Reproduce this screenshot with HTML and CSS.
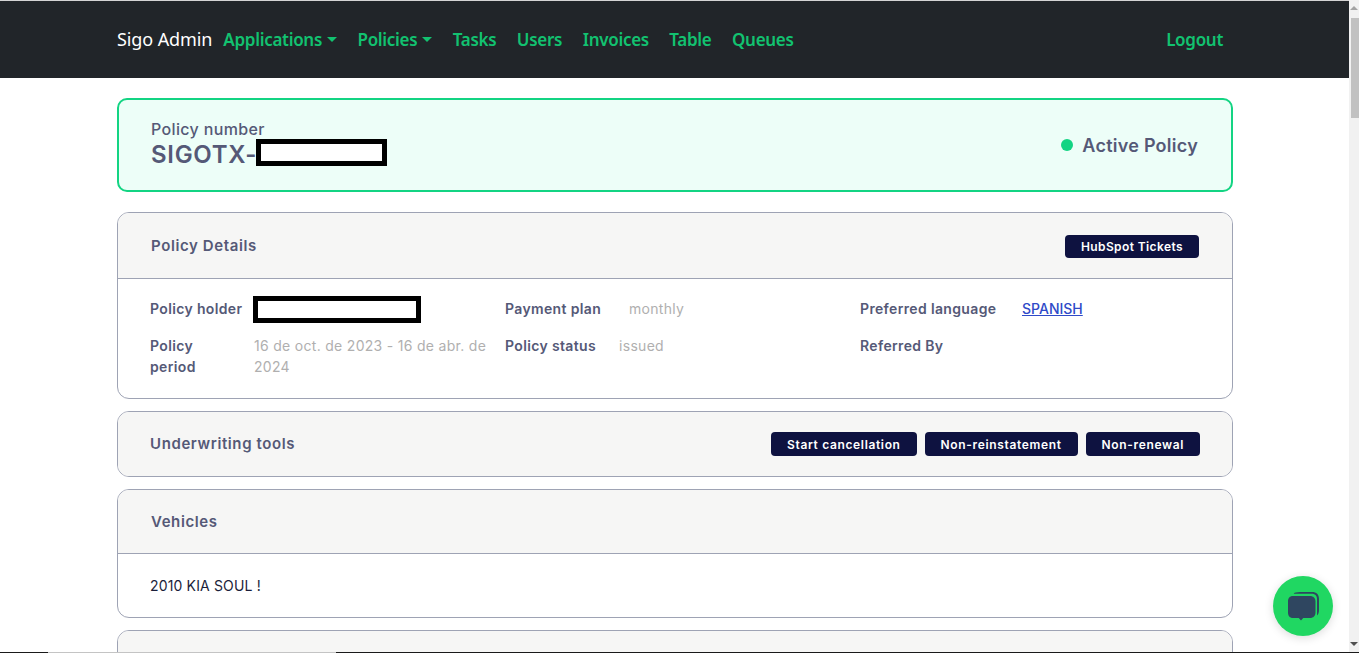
FILE: index.html
```html
<!DOCTYPE html>
<html lang="en">
<head>
<meta charset="utf-8">
<title>Sigo Admin</title>
<link rel="stylesheet" href="styles.css">
</head>
<body>
<div class="screen">
  <div class="window">
    <div class="page">
      <nav class="navbar">
        <a class="brand">Sigo Admin</a>
        <ul class="nav-links">
          <li><a class="nav-link caret">Applications</a></li>
          <li><a class="nav-link caret">Policies</a></li>
          <li><a class="nav-link">Tasks</a></li>
          <li><a class="nav-link">Users</a></li>
          <li><a class="nav-link">Invoices</a></li>
          <li><a class="nav-link">Table</a></li>
          <li><a class="nav-link">Queues</a></li>
        </ul>
        <a class="nav-link logout">Logout</a>
      </nav>
      <main class="content">
        <section class="policy-banner">
          <div class="policy-id">
            <div class="policy-label">Policy number</div>
            <div class="policy-number">SIGOTX-<span class="redact redact-number"></span></div>
          </div>
          <div class="policy-state"><span class="dot"></span>Active Policy</div>
        </section>

        <section class="card">
          <header class="card-head head-details">
            <h2>Policy Details</h2>
            <div class="actions"><button class="btn btn-hubspot">HubSpot Tickets</button></div>
          </header>
          <div class="details">
            <div class="pair pair-a"><span class="key">Policy holder</span><span class="redact redact-holder"></span></div>
            <div class="pair pair-b"><span class="key">Payment plan</span><span class="val">monthly</span></div>
            <div class="pair pair-c"><span class="key">Preferred language</span><a class="link">SPANISH</a></div>
            <div class="pair pair-a"><span class="key">Policy<br>period</span><span class="val">16 de oct. de 2023 - 16 de abr. de 2024</span></div>
            <div class="pair pair-s"><span class="key">Policy status</span><span class="val">issued</span></div>
            <div class="pair pair-c"><span class="key">Referred By</span><span class="val"></span></div>
          </div>
        </section>

        <section class="card">
          <header class="card-head head-tools">
            <h2 class="title-tools">Underwriting tools</h2>
            <div class="actions">
              <button class="btn">Start cancellation</button>
              <button class="btn">Non-reinstatement</button>
              <button class="btn">Non-renewal</button>
            </div>
          </header>
        </section>

        <section class="card">
          <header class="card-head head-vehicles"><h2>Vehicles</h2></header>
          <div class="vehicles">2010 KIA SOUL !</div>
        </section>

        <section class="card">
          <header class="card-head head-vehicles"></header>
        </section>
      </main>
    </div>
    <aside class="scrollbar">
      <span class="arrow arrow-up"></span>
      <span class="thumb"></span>
      <span class="arrow arrow-down"></span>
    </aside>
  </div>
  <div class="taskbar"><span class="task-a"></span><span class="task-b"></span><span class="task-c"></span></div>
</div>
<button class="chat" aria-label="Chat">
  <svg width="32" height="32" viewBox="0 0 32 32" aria-hidden="true">
    <path d="M7 3C9 2.200 12 2 16 2h9c4.500 0 7 2.500 7 7v11c0 2.500-.6 4.300-2 5.500V9.500C30 5.500 28 3.800 24 3.800H8C7 3.800 6.500 3.300 7 3z" fill="#2f4660"/>
    <path d="M6 6h17c3.300 0 5.500 2.200 5.500 5.500V22.500c0 3.300-2.200 5.500-5.500 5.500h-6.800L14 30.500 11.800 28H6c-3.300 0-5-2.200-5-5.500v-11C1 8.200 2.700 6 6 6z" fill="#2f4660"/>
  </svg>
</button>
</body>
</html>
```
FILE: styles.css
```css
* { box-sizing: border-box; }
html, body { margin: 0; height: 100%; overflow: hidden; background: #fff; }
body { font-family: "Inter", "Liberation Sans", sans-serif; color: #555977; }
h2 { margin: 0; }

.screen { height: 100vh; display: flex; flex-direction: column; }
.window { flex: 1; min-height: 0; display: flex; }
.page { flex: 1; min-width: 0; overflow: hidden; }

.navbar {
  height: 78px;
  border-top: 1px solid #d4d4d4;
  background: #212529;
  padding: 0 126px 1px 117px;
  display: flex;
  align-items: center;
  font-family: "Noto Sans", "Open Sans", sans-serif;
  font-size: 17px;
}
.brand { color: #fff; font-size: 18px; margin-right: 11px; letter-spacing: -.1px; }
.nav-links { list-style: none; margin: 0; padding: 0; display: flex; gap: 20.5px; flex: 1; }
.nav-link { color: #12c270; font-weight: 600; display: flex; align-items: center; letter-spacing: -.3px; }
.caret::after {
  content: "";
  margin-left: 5px;
  border-top: 5px solid #12c270;
  border-left: 5px solid transparent;
  border-right: 5px solid transparent;
}

.content { width: 1116px; margin-left: 117px; padding-top: 20px; display: flex; flex-direction: column; gap: 12px; }

.policy-banner {
  height: 94px;
  margin-bottom: 8px;
  padding: 0 33px 0 32px;
  background: #edfef8;
  border: 2px solid #13d483;
  border-radius: 10px;
  display: flex;
  align-items: center;
  justify-content: space-between;
}
.policy-label { font-size: 16px; font-weight: 500; line-height: 18px; letter-spacing: .35px; margin-bottom: 2px; }
.policy-number { font-size: 24px; font-weight: 600; line-height: 30px; letter-spacing: .7px; display: flex; align-items: center; }
.redact { display: block; background: #fff; border: 5px solid #000; }
.redact-number { width: 131px; height: 27px; margin: -3px 0 3px -1px; }
.redact-holder { width: 168px; height: 27px; margin: -2px 0 -4px -1px; }
.policy-state { display: flex; align-items: center; gap: 9px; font-size: 18px; font-weight: 600; letter-spacing: .25px; }
.dot { width: 12px; height: 12px; border-radius: 50%; background: #13d483; }

.card { border: 1px solid #9ea3b4; border-radius: 12px; overflow: hidden; flex: none; }
.card-head {
  background: #f6f6f5;
  display: flex;
  align-items: center;
  justify-content: space-between;
  padding: 0 33px;
}
.card-head h2 { font-size: 15px; font-weight: 600; letter-spacing: .6px; }
.head-details { height: 66px; border-bottom: 1px solid #9ea3b4; }
.head-tools { height: 64px; padding: 0 32px; }
.head-vehicles { height: 64px; border-bottom: 1px solid #9ea3b4; }
.card-head .title-tools { letter-spacing: .6px; margin-bottom: 2px; }
.actions { display: flex; gap: 8px; }
.btn {
  height: 24px;
  padding: 0 16px;
  border: 0;
  border-radius: 4px;
  background: #0e1240;
  color: #fff;
  font-family: inherit;
  font-size: 12px;
  font-weight: 600;
  letter-spacing: .65px;
}
.btn-hubspot { height: 23px; margin-top: 2px; letter-spacing: .4px; }

.details {
  padding: 19px 32px 21px;
  display: grid;
  grid-template-columns: repeat(3, 355px);
  row-gap: 16px;
  font-size: 14px;
  line-height: 21px;
}
.pair { display: grid; }
.pair-a { grid-template-columns: 104px 1fr; }
.pair-b { grid-template-columns: 124px 1fr; }
.pair-s { grid-template-columns: 114px 1fr; }
.pair-c { grid-template-columns: 162px 1fr; }
.key { font-weight: 600; letter-spacing: .35px; }
.val { color: #b0afaf; letter-spacing: .3px; }
.link { color: #2f4ac8; font-weight: 500; text-decoration: underline; }

.vehicles { height: 63px; padding: 0 32px; display: flex; align-items: center; font-size: 14px; color: #1b1e3a; letter-spacing: .15px; }

.scrollbar { width: 10px; background: #f1f1f1; position: relative; display: flex; flex-direction: column; align-items: flex-end; }
.thumb { width: 8px; height: 100px; margin-top: 8px; background: #c1c1c1; }
.arrow { display: block; width: 0; height: 0; border-left: 4px solid transparent; border-right: 4px solid transparent; }
.arrow-up { margin: 6px 1px 0 0; border-bottom: 4px solid #a3a3a3; }
.arrow-down { margin: auto 1px 6px 0; border-top: 4px solid #505050; }

.taskbar { height: 1px; display: flex; flex: none; }
.task-a { width: 48px; background: #1a1a1a; }
.task-b { width: 288px; background: #c4c4c4; }
.task-c { flex: 1; background: #1a1a1a; }

.chat {
  position: fixed;
  left: 1273px;
  top: 576px;
  width: 60px;
  height: 60px;
  padding: 0;
  border: 0;
  border-radius: 50%;
  background: #20d762;
  box-shadow: 0 2px 10px rgba(0,0,0,.14);
  display: flex;
  align-items: center;
  justify-content: center;
}
```
